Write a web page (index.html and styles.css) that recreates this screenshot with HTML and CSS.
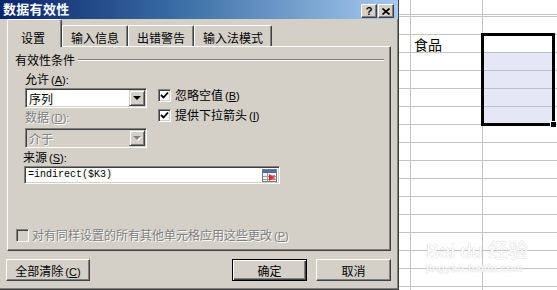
FILE: index.html
```html
<!DOCTYPE html>
<html lang="zh-CN">
<head>
    <meta charset="UTF-8">
    <title>数据有效性</title>
    <link rel="stylesheet" href="styles.css">
</head>
<body>
    <div class="screen">
        <div class="dialog">
            <div class="titlebar">
                <span class="title">数据有效性</span>
                <div class="tb-btns">
                    <span class="tb-btn help">?</span>
                    <span class="tb-btn">
                        <svg width="8" height="7" viewBox="0 0 8 7"><path d="M0.5 0.5 L7.5 6.5 M7.5 0.5 L0.5 6.5" stroke="#000" stroke-width="1.6"/></svg>
                    </span>
                </div>
            </div>

            <div class="dlg-body">
                <div class="tabs">
                    <div class="tab active">设置</div>
                    <div class="tab">输入信息</div>
                    <div class="tab">出错警告</div>
                    <div class="tab">输入法模式</div>
                </div>

                <div class="panel">
                    <div class="group-head">
                        <span>有效性条件</span>
                        <i class="etch"></i>
                    </div>

                    <div class="cond">
                        <div class="cond-left">
                            <div class="lbl">允许<span class="mn">(<u>A</u>):</span></div>
                            <div class="combo">
                                <span class="combo-text">序列</span>
                                <span class="combo-btn"><i class="arrow"></i></span>
                            </div>
                            <div class="lbl off">数据<span class="mn">(<u>D</u>):</span></div>
                            <div class="combo off">
                                <span class="combo-text">介于</span>
                                <span class="combo-btn"><i class="arrow"></i></span>
                            </div>
                        </div>
                        <div class="cond-right">
                            <label class="chk">
                                <span class="box"><svg width="9" height="9" viewBox="0 0 9 9"><path d="M1 4 L3.5 6.5 L8 1.5" fill="none" stroke="#000" stroke-width="1.8"/></svg></span>
                                <span>忽略空值<span class="mn">(<u>B</u>)</span></span>
                            </label>
                            <label class="chk">
                                <span class="box"><svg width="9" height="9" viewBox="0 0 9 9"><path d="M1 4 L3.5 6.5 L8 1.5" fill="none" stroke="#000" stroke-width="1.8"/></svg></span>
                                <span>提供下拉箭头<span class="mn">(<u>I</u>)</span></span>
                            </label>
                        </div>
                    </div>

                    <div class="lbl src-lbl">来源<span class="mn">(<u>S</u>):</span></div>
                    <div class="src">
                        <span class="src-text">=indirect($K3)</span>
                        <svg class="ref-icon" width="15" height="13" viewBox="0 0 15 13">
                            <rect x="0.5" y="0.5" width="14" height="12" fill="#f4f4f4" stroke="#7a7a7a"/>
                            <rect x="1" y="1" width="13" height="3" fill="#4a6ea8"/>
                            <path d="M1 7.5 H14 M1 10.5 H14 M5.5 4 V12" stroke="#9a9a9a"/>
                            <path d="M7 5 L12 8.5 L7 12 Z" fill="#d42020"/>
                            <rect x="8" y="6" width="5" height="5" fill="#e04040" opacity="0.6"/>
                        </svg>
                    </div>

                    <label class="chk apply off">
                        <span class="box"></span>
                        <span>对有同样设置的所有其他单元格应用这些更改<span class="mn">(<u>P</u>)</span></span>
                    </label>
                </div>

                <div class="footer">
                    <button class="btn clear">全部清除<span class="mn">(<u>C</u>)</span></button>
                    <span class="spacer"></span>
                    <button class="btn default">确定</button>
                    <button class="btn">取消</button>
                </div>
            </div>
        </div>

        <div class="sheet">
            <div class="col c1"></div>
            <div class="col c2"><div class="cell-text">食品</div></div>
            <div class="col c3"><div class="selection"></div></div>
            <div class="watermark">
                <div class="wm-big">Bai du 经验</div>
                <div class="wm-small">jingyan.baidu.com</div>
            </div>
        </div>
    </div>
</body>
</html>
```

FILE: styles.css
```css
body {
    margin: 0;
    font-family: "Noto Sans CJK SC", "Liberation Sans", sans-serif;
    font-size: 12px;
    line-height: 14px;
    color: #000;
    background-color: #fff;
}
.screen {
    display: flex;
    width: 557px;
    height: 290px;
    overflow: hidden;
}
.mn {
    margin-left: 2px;
    font-family: "Liberation Sans", sans-serif;
    font-size: 11px;
}

/* dialog window */
.dialog {
    flex: none;
    width: 399px;
    height: 290px;
    box-sizing: border-box;
    background-color: #d4d0c8;
    border-right: 1px solid #404040;
    border-bottom: 1px solid #404040;
    box-shadow: inset -1px -1px #808080;
}
.titlebar {
    display: flex;
    align-items: flex-start;
    height: 19px;
    background: linear-gradient(to right, #0a246a, #3a6ea5 45%, #a6caf0);
}
.title {
    padding: 2px 0 0 3px;
    color: #fff;
    font-weight: bold;
    font-size: 13px;
    letter-spacing: 0.3px;
}
.tb-btns {
    display: flex;
    gap: 1px;
    margin: 4px 0 0 auto;
    padding-right: 4px;
}
.tb-btn {
    display: flex;
    align-items: center;
    justify-content: center;
    width: 14px;
    height: 12px;
    background-color: #d4d0c8;
    border: 1px solid;
    border-color: #fff #404040 #404040 #fff;
    box-shadow: inset -1px -1px #808080;
}
.tb-btn.help {
    font-family: "Liberation Sans", sans-serif;
    font-weight: bold;
    font-size: 11px;
    line-height: 12px;
}

.dlg-body {
    padding: 0 7px 0 7px;
}
.tabs {
    display: flex;
    align-items: flex-end;
    height: 27px;
}
.tab {
    position: relative;
    box-sizing: border-box;
    height: 21px;
    padding: 5px 8px 0;
    border: 1px solid;
    border-bottom: none;
    border-color: #fff #404040 #404040 #fff;
    border-radius: 2px 2px 0 0;
    box-shadow: inset -1px 0 #808080;
    background-color: #d4d0c8;
}
.tab.active {
    z-index: 1;
    height: 28px;
    margin-bottom: -1px;
    padding: 11px 16px 0 13px;
}

.panel {
    display: flex;
    flex-direction: column;
    box-sizing: border-box;
    height: 205px;
    border: 1px solid;
    border-color: #fff #404040 #404040 #fff;
    box-shadow: inset -1px -1px #808080;
}
.group-head {
    display: flex;
    align-items: center;
    margin: 6px 6px 0 7px;
}
.etch {
    flex: 1;
    height: 0;
    margin-left: 3px;
    border-top: 1px solid #808080;
    border-bottom: 1px solid #fff;
}

.cond {
    display: flex;
    margin-top: 5px;
    padding-left: 17px;
}
.cond-left {
    width: 122px;
}
.cond-right {
    display: flex;
    flex-direction: column;
    gap: 6px;
    margin-left: 11px;
    padding-top: 16px;
}
.lbl {
    height: 14px;
}
.lbl.off, .chk.off, .combo.off .combo-text {
    color: #808080;
    text-shadow: 1px 1px #fff;
}
.combo {
    display: flex;
    box-sizing: border-box;
    height: 20px;
    margin-top: 2px;
    margin-bottom: 2px;
    background-color: #fff;
    border: 1px solid;
    border-color: #808080 #fff #fff #808080;
    box-shadow: inset 1px 1px #404040, inset -1px -1px #d4d0c8;
}
.combo.off {
    margin-top: 4px;
    background-color: #d4d0c8;
}
.combo-text {
    flex: 1;
    padding: 3px 0 0 3px;
}
.combo-btn {
    display: flex;
    align-items: center;
    justify-content: center;
    box-sizing: border-box;
    width: 16px;
    height: 16px;
    margin: 1px 1px 0 0;
    background-color: #d4d0c8;
    border: 1px solid;
    border-color: #d4d0c8 #404040 #404040 #d4d0c8;
    box-shadow: inset 1px 1px #fff, inset -1px -1px #808080;
}
.arrow {
    width: 0;
    height: 0;
    border-left: 4px solid transparent;
    border-right: 4px solid transparent;
    border-top: 4px solid #000;
}
.combo.off .arrow {
    border-top-color: #808080;
    filter: drop-shadow(1px 1px 0 #fff);
}

.chk {
    display: flex;
    align-items: center;
    gap: 4px;
    height: 14px;
}
.box {
    display: flex;
    align-items: center;
    justify-content: center;
    box-sizing: border-box;
    width: 13px;
    height: 13px;
    background-color: #fff;
    border: 1px solid;
    border-color: #808080 #fff #fff #808080;
    box-shadow: inset 1px 1px #404040, inset -1px -1px #d4d0c8;
}
.chk.off .box {
    background-color: #d4d0c8;
    box-shadow: inset 1px 1px #404040;
}

.src-lbl {
    margin-left: 15px;
}
.src {
    display: flex;
    align-items: center;
    box-sizing: border-box;
    width: 256px;
    height: 18px;
    margin: 2px 0 0 16px;
    padding: 0 2px 0 3px;
    background-color: #fff;
    border: 1px solid;
    border-color: #808080 #fff #fff #808080;
    box-shadow: inset 1px 1px #404040, inset -1px -1px #d4d0c8;
}
.src-text {
    flex: 1;
    font-family: "Liberation Mono", monospace;
    font-size: 10px;
}

.apply {
    gap: 3px;
    margin: 44px 0 0 8px;
}

.footer {
    display: flex;
    gap: 9px;
    margin-top: 8px;
}
.spacer {
    flex: 1;
}
.btn {
    box-sizing: border-box;
    width: 75px;
    height: 22px;
    padding: 0;
    font-family: inherit;
    font-size: 12px;
    color: #000;
    background-color: #d4d0c8;
    border: 1px solid;
    border-color: #fff #404040 #404040 #fff;
    box-shadow: inset -1px -1px #808080;
}
.btn.clear {
    width: 84px;
    margin-left: -1px;
}
.btn.default {
    border: 1px solid #000;
    box-shadow: inset 1px 1px #fff, inset -1px -1px #404040, inset -2px -2px #808080;
}

/* worksheet behind the dialog */
.sheet {
    position: relative;
    flex: 1;
    display: flex;
    background-color: #fff;
    background-image: repeating-linear-gradient(to bottom, #c4c4c4 0 1px, transparent 1px 18px);
    background-position: 0 16px;
}
.col {
    flex: none;
    border-right: 1px solid #c4c4c4;
}
.c1 {
    width: 11px;
}
.c2 {
    width: 71px;
}
.c3 {
    flex: 1;
    border-right: none;
}
.cell-text {
    margin: 36px 0 0 3px;
    font-size: 14px;
    line-height: 16px;
}
.selection {
    position: relative;
    box-sizing: border-box;
    width: 74px;
    height: 93px;
    margin: 33px 0 0 -2px;
    border: 3px solid #000;
    background: linear-gradient(to bottom, transparent 16px, rgba(170, 180, 225, 0.32) 16px);
}
.selection::after {
    content: "";
    position: absolute;
    right: -4px;
    bottom: -4px;
    width: 5px;
    height: 5px;
    background-color: #000;
    border-left: 1px solid #fff;
    border-top: 1px solid #fff;
}
.watermark {
    position: absolute;
    left: 27px;
    top: 240px;
    color: #fff;
    text-shadow: 0 0 1px #cfcfcf, 0 0 1px #cfcfcf;
    font-family: "Liberation Sans", "Noto Sans CJK SC", sans-serif;
}
.wm-big {
    font-size: 20px;
    line-height: 22px;
}
.wm-small {
    font-size: 11px;
    line-height: 12px;
    letter-spacing: 0.5px;
}
```
